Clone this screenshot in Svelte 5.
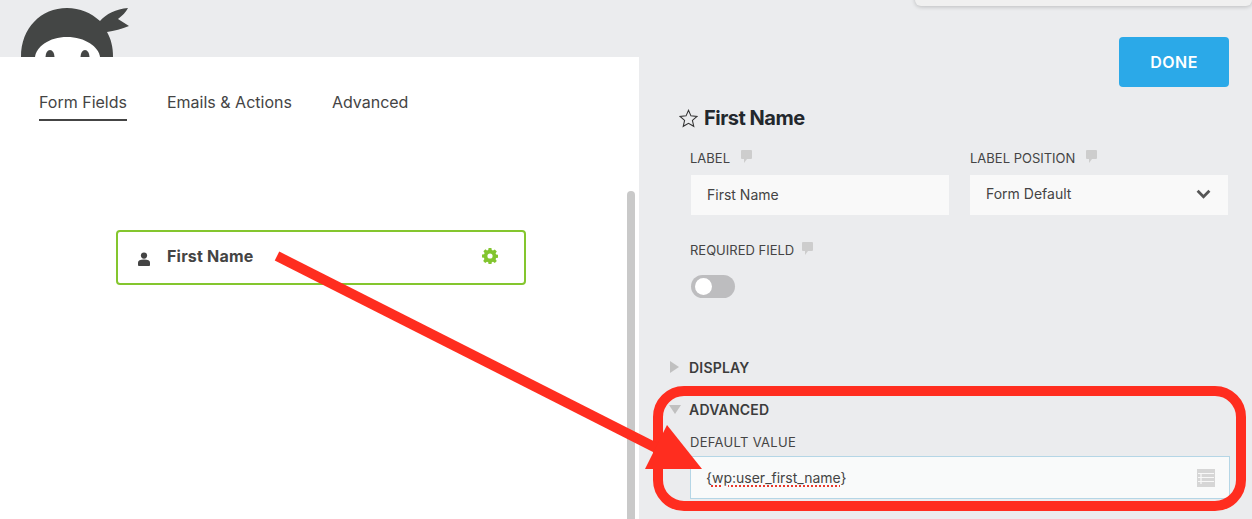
<script lang="ts">
	const tabs = ['Form Fields', 'Emails & Actions', 'Advanced'];
	let activeTab = $state('Form Fields');
</script>

{#snippet bubble()}
	<svg class="bubble" viewBox="0 0 11 13" width="11" height="13">
		<path d="M1 0h9a1 1 0 0 1 1 1v7a1 1 0 0 1-1 1H6l-3 4V9H1a1 1 0 0 1-1-1V1a1 1 0 0 1 1-1z" fill="#cdcdcd" />
	</svg>
{/snippet}

<div class="page">
	<div class="builder">
		<div class="logo-strip">
			<svg class="logo" viewBox="0 0 140 57" width="140" height="57">
				<path d="M21 57C21 28 41 8 67 8c13 0 24 5 33 13 6-7 16-12 28-13-2 4-6 8-10 11l11 7c-7 3-15 5-22 6 4 7 6 15 6 25z" fill="#444645" />
				<path d="M35 57c1-10 14-20 32-20s32 10 33 20z" fill="#fff" />
				<ellipse cx="50" cy="57" rx="4.500" ry="7" fill="#444645" />
				<ellipse cx="85" cy="57" rx="4.500" ry="7" fill="#444645" />
			</svg>
		</div>
		<div class="panel">
			<div class="panel-main">
				<nav class="tabs">
					{#each tabs as tab}
						<button class="tab" class:active={activeTab === tab} onclick={() => (activeTab = tab)}>{tab}</button>
					{/each}
				</nav>
				<div class="field-item">
					<svg class="person" viewBox="0 0 14 14" width="14" height="14">
						<circle cx="7" cy="3.600" r="3.100" fill="#444" />
						<path d="M1 13.200V10.600C1 8.400 3 7.400 7 7.400s6 1 6 3.200v2.600c0 .5-.4.800-1 .800H2c-.6 0-1-.3-1-.8z" fill="#444" />
					</svg>
					<span class="field-name">First Name</span>
					<svg class="gear" viewBox="0 0 16 16" width="16" height="16">
						<path fill="#82c52f" fill-rule="evenodd" d="M6.600 0h2.800l.4 2.100 1.200.5 1.800-1.200 2 2-1.200 1.800.5 1.200 2.100.4v2.800l-2.100.4-.5 1.200 1.200 1.800-2 2-1.800-1.200-1.200.5-.4 2.100H6.600l-.4-2.100-1.200-.5-1.800 1.200-2-2L2.400 11l-.5-1.200L0 9.400V6.600l2.100-.4.5-1.200L1.400 3.200l2-2L5 2.400l1.200-.5zM8 5.400a2.600 2.600 0 1 0 0 5.200a2.600 2.600 0 0 0 0-5.200z" />
					</svg>
				</div>
			</div>
			<div class="scrollbar"></div>
		</div>
	</div>

	<aside class="settings">
		<div class="actions">
			<button class="done">DONE</button>
		</div>
		<h2 class="title">
			<svg viewBox="0 0 18 18" width="19" height="19">
				<path d="M9 1.200l2.300 5.300 5.700.5-4.300 3.800 1.300 5.600L9 13.500l-5 2.900 1.300-5.600L1 7l5.700-.5z" fill="none" stroke="#333" stroke-width="1" />
			</svg>
			First Name
		</h2>
		<div class="row">
			<div class="setting">
				<span class="caption first">LABEL {@render bubble()}</span>
				<div class="input">First Name</div>
			</div>
			<div class="setting">
				<span class="caption">LABEL POSITION {@render bubble()}</span>
				<div class="input select">
					Form Default
					<svg viewBox="0 0 14 9" width="15" height="10">
						<path d="M1.500 1.500L7 7l5.500-5.500" fill="none" stroke="#555" stroke-width="2.600" />
					</svg>
				</div>
			</div>
		</div>
		<div class="required">
			<span class="caption">REQUIRED FIELD {@render bubble()}</span>
			<div class="toggle"><span class="knob"></span></div>
		</div>
		<div class="section display">
			<svg viewBox="0 0 9 12" width="9" height="12"><path d="M0 0l9 6-9 6z" fill="#c0c0c0" /></svg>
			DISPLAY
		</div>
		<div class="section advanced">
			<svg viewBox="0 0 12 9" width="12" height="9"><path d="M0 0h12l-6 9z" fill="#c0c0c0" /></svg>
			ADVANCED
		</div>
		<div class="default-value">
			<span class="caption wide">DEFAULT VALUE</span>
			<div class="input merge">
				<span>{'{'}<span class="misspelt">wp:user_first_name</span>{'}'}</span>
				<svg viewBox="0 0 18 18" width="18" height="18">
					<path fill="#d6d6d6" d="M0 0h18v18H0z" />
					<path stroke="#f8f8f8" stroke-width="1.200" d="M1 4.500h16M1 8.500h16M1 12.500h16M4 4v11" />
				</svg>
			</div>
		</div>
	</aside>

	<div class="popup"></div>

	<svg class="annotation" viewBox="0 0 1252 519" width="1252" height="519">
		<rect x="658" y="391" width="583" height="115" rx="26" fill="none" stroke="#ff2d1f" stroke-width="10" />
		<path d="M277 256L672 456" stroke="#ff2d1f" stroke-width="10" fill="none" />
		<path d="M667 425L702 469H645z" fill="#ff2d1f" />
	</svg>
</div>

<style>
	:global(body) {
		margin: 0;
		background: #ebecee;
	}

	.page {
		position: relative;
		display: flex;
		width: 1252px;
		height: 519px;
		overflow: hidden;
		background: #ebecee;
		font-family: Inter, 'Noto Sans', sans-serif;
		color: #444;
	}

	.builder {
		display: flex;
		flex-direction: column;
		width: 639px;
		flex: none;
	}

	.logo-strip {
		height: 57px;
		flex: none;
	}

	.logo {
		display: block;
	}

	.panel {
		flex: 1;
		display: flex;
		background: #fff;
	}

	.panel-main {
		flex: 1;
	}

	.scrollbar {
		width: 8px;
		margin: 134px 4px 0 0;
		background: #c9c9c9;
		border-radius: 4px 4px 0 0;
	}

	.tabs {
		display: flex;
		gap: 40px;
		padding: 35px 0 0 39px;
	}

	.tab {
		padding: 0 0 7px;
		border: 0;
		border-bottom: 2px solid transparent;
		background: none;
		font: 400 16px/20px Inter, sans-serif;
		color: #444;
	}

	.tab.active {
		border-bottom-color: #444;
	}

	.field-item {
		display: flex;
		align-items: center;
		box-sizing: border-box;
		width: 410px;
		height: 55px;
		margin: 109px 0 0 116px;
		padding: 0 26px 0 19px;
		border: 2px solid #84c62e;
		border-radius: 4px;
	}

	.person {
		margin-top: 2px;
	}

	.field-name {
		flex: 1;
		margin: -3px 0 0 16px;
		font-size: 16px;
		font-weight: 700;
		letter-spacing: 0.2px;
		color: #444;
	}

	.gear {
		margin-top: -3px;
	}

	.settings {
		flex: 1;
		padding: 37px 23px 0 41px;
	}

	.actions {
		display: flex;
		justify-content: flex-end;
	}

	.done {
		width: 110px;
		height: 50px;
		border: 0;
		border-radius: 4px;
		background: #2ba9e8;
		color: #fff;
		font: 600 16px Inter, sans-serif;
		letter-spacing: 0.5px;
	}

	.title {
		display: flex;
		align-items: center;
		gap: 6px;
		height: 24px;
		margin: 19px 0 0 -1px;
		font-size: 20px;
		line-height: 24px;
		font-weight: 700;
		letter-spacing: -0.5px;
		color: #23282d;
	}

	.row {
		display: grid;
		grid-template-columns: 258px 258px;
		gap: 21px;
		margin: 19px 0 0 11px;
	}

	.caption {
		display: flex;
		align-items: flex-start;
		gap: 11px;
		height: 18px;
		font-size: 13px;
		line-height: 18px;
		color: #444;
	}

	.caption.first {
		margin-left: -1px;
	}

	.bubble {
		margin-top: 1px;
	}

	.input {
		display: flex;
		align-items: center;
		box-sizing: border-box;
		height: 40px;
		margin-top: 8px;
		padding: 0 16px 1px;
		background: #f9f9f9;
		font-size: 14px;
		color: #444;
	}

	.select {
		justify-content: space-between;
		padding: 0 17px 3px 16px;
	}

	.required {
		margin: 26px 0 0 10px;
	}

	.required .caption {
		gap: 8px;
	}

	.toggle {
		display: flex;
		align-items: center;
		width: 44px;
		height: 23px;
		margin: 16px 0 0 1px;
		padding-left: 4px;
		box-sizing: border-box;
		border-radius: 12px;
		background: #bdbdbf;
	}

	.knob {
		width: 17px;
		height: 17px;
		border-radius: 50%;
		background: #fff;
	}

	.section {
		display: flex;
		align-items: center;
		height: 18px;
		font-size: 14px;
		font-weight: 600;
		letter-spacing: 0.2px;
		color: #3c3c3c;
	}

	.display {
		gap: 10px;
		margin: 60px 0 0 -10px;
	}

	.advanced {
		gap: 8px;
		margin: 24px 0 0 -11px;
	}

	.default-value {
		margin: 15px -1px 0 10px;
	}

	.wide {
		letter-spacing: 0.3px;
	}

	.merge {
		justify-content: space-between;
		height: 43px;
		margin-top: 5px;
		padding: 0 14px 0 15px;
		border: 1px solid #b5d6e6;
		background: #f9fafa;
	}

	.misspelt {
		text-decoration: underline dotted #e8382c 2px;
		text-underline-offset: 2px;
	}

	.popup {
		position: absolute;
		top: -10px;
		right: 0;
		width: 337px;
		height: 16px;
		background: #f0f0f0;
		border-radius: 6px;
		box-shadow: 0 1px 4px rgba(0, 0, 0, 0.2);
	}

	.annotation {
		position: absolute;
		top: 0;
		left: 0;
		pointer-events: none;
	}
</style>
